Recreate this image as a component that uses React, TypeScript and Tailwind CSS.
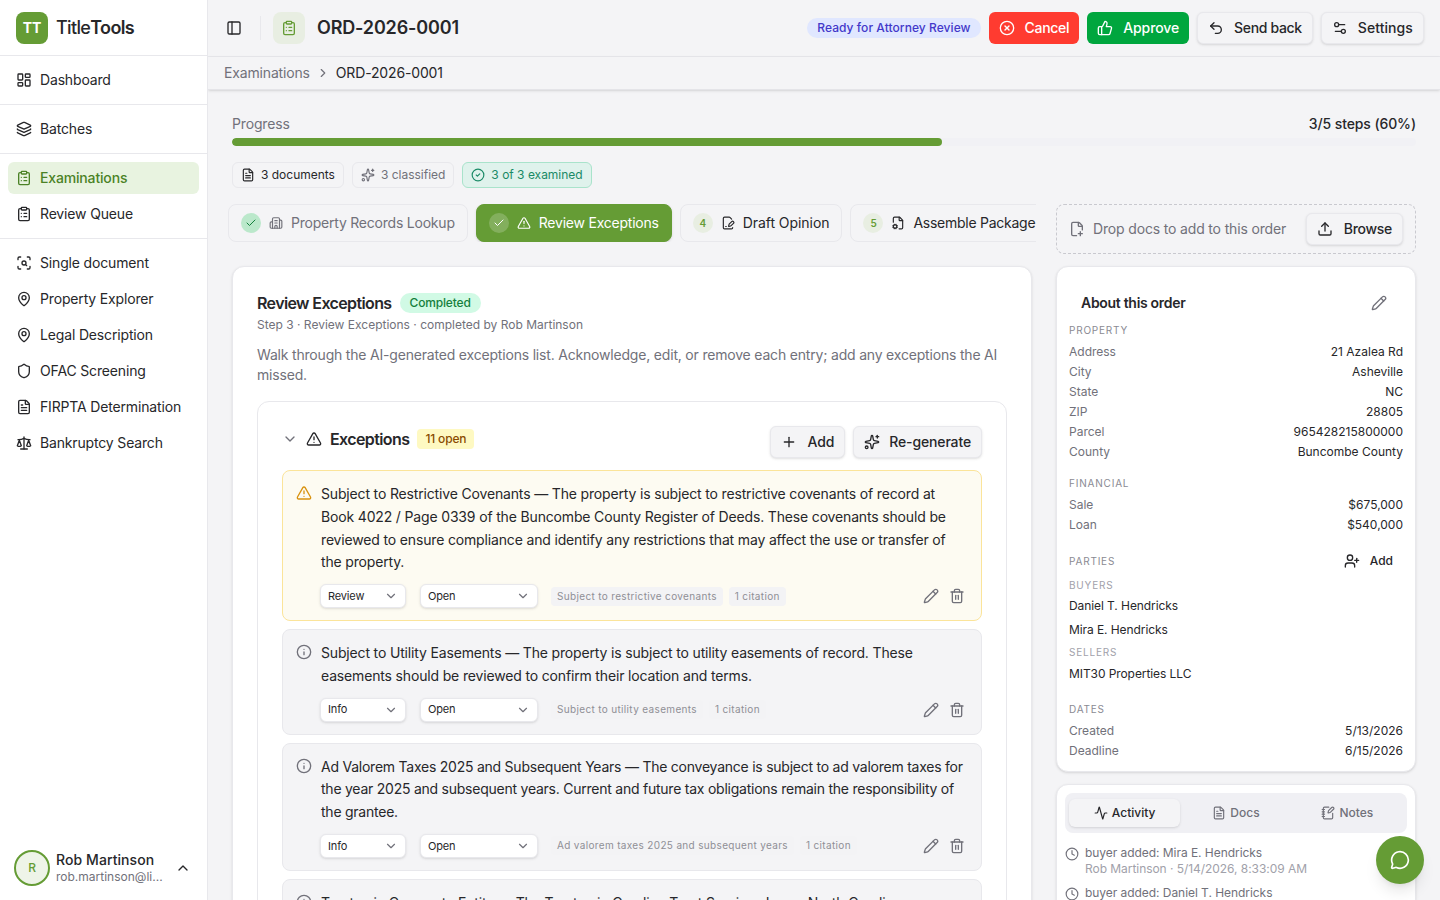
import React from "react";
import {
  LayoutDashboard, Layers, ClipboardList, ScanSearch, MapPin, Shield, FileText, Scale,
  ChevronUp, ChevronDown, ChevronRight, PanelLeft, CircleX, ThumbsUp, Undo2, Settings2,
  Sparkles, CircleCheck, Check, Building2, TriangleAlert, FilePenLine, FileCog, FilePlus2, Upload,
  Plus, Info, Pencil, Trash2, UserPlus, Clock, Activity, MessageCircle, NotebookPen,
} from "lucide-react";

const font = "font-['Inter','Liberation_Sans',sans-serif]";

function NavItem({ icon: Icon, label, active }: { icon: any; label: string; active?: boolean }) {
  return (
    <div className={`flex h-8 items-center gap-2 rounded-md px-2 text-sm ${active ? "bg-[#e8f3e0] font-medium text-[#4b8226]" : "text-[#27272a]"}`}>
      <Icon className="size-4 shrink-0" strokeWidth={2} />
      <span>{label}</span>
    </div>
  );
}

function Sidebar() {
  return (
    <aside className="flex h-full w-[208px] shrink-0 flex-col border-r border-[#e8e8ec] bg-white">
      <div className="flex h-[56px] shrink-0 items-center gap-2 border-b border-[#e8e8ec] px-4">
        <div className="flex size-8 items-center justify-center rounded-lg bg-[#659c35] text-sm font-bold text-white">TT</div>
        <span className="text-lg font-semibold tracking-[-0.65px] text-[#27272a]"><span className="font-medium">Title</span>Tools</span>
      </div>
      <div className="border-b border-[#e8e8ec] p-2"><NavItem icon={LayoutDashboard} label="Dashboard" /></div>
      <div className="border-b border-[#e8e8ec] p-2"><NavItem icon={Layers} label="Batches" /></div>
      <div className="flex flex-col gap-1 border-b border-[#e8e8ec] p-2">
        <NavItem icon={ClipboardList} label="Examinations" active />
        <NavItem icon={ClipboardList} label="Review Queue" />
      </div>
      <div className="flex flex-col gap-1 p-2">
        <NavItem icon={ScanSearch} label="Single document" />
        <NavItem icon={MapPin} label="Property Explorer" />
        <NavItem icon={MapPin} label="Legal Description" />
        <NavItem icon={Shield} label="OFAC Screening" />
        <NavItem icon={FileText} label="FIRPTA Determination" />
        <NavItem icon={Scale} label="Bankruptcy Search" />
      </div>
      <div className="mt-auto flex items-center gap-1.5 pb-[14px] pl-3.5 pr-4">
        <div className="flex size-9 shrink-0 items-center justify-center rounded-full border-2 border-[#659c35] bg-[#eef4e8] text-xs font-medium text-[#659c35]">R</div>
        <div className="min-w-0 flex-1">
          <div className="text-sm font-medium leading-[18px] tracking-[0.08px] text-[#27272a]">Rob Martinson</div>
          <div className="truncate text-xs leading-4 tracking-normal text-[#71717a]">rob.martinson@li...</div>
        </div>
        <ChevronUp className="size-4 text-[#27272a]" />
      </div>
    </aside>
  );
}

function HBtn({ icon: Icon, label, cls }: { icon: any; label: string; cls: string }) {
  return (
    <div className={`flex h-8 items-center gap-2 rounded-md px-2.5 text-sm font-medium ${cls}`}>
      <Icon className="size-4" />
      <span className="ml-0.5">{label}</span>
    </div>
  );
}

function Header() {
  const outline = "border border-[#e8e8ec] bg-[#f4f4f6] text-[#27272a] shadow-sm";
  return (
    <>
      <header className="flex h-[57px] shrink-0 items-center border-b border-[#e8e8ec] pl-[18px] pr-4">
        <PanelLeft className="size-4 text-[#27272a]" />
        <div className="ml-[18px] h-6 w-px bg-[#e8e8ec]" />
        <div className="ml-3 flex size-8 items-center justify-center rounded-lg bg-[#e8eee2]">
          <ClipboardList className="size-4 text-[#659c35]" />
        </div>
        <h1 className="ml-3 text-lg font-semibold text-[#27272a]">ORD-2026-0001</h1>
        <div className="ml-auto flex items-center gap-2">
          <span className="flex h-5 items-center rounded-full bg-[#e0e7ff] px-2.5 text-xs font-medium tracking-[0.06px] text-[#4338ca]">Ready for Attorney Review</span>
          <HBtn icon={CircleX} label="Cancel" cls="bg-[#ff3b30] text-white tracking-[-0.3px]" />
          <HBtn icon={ThumbsUp} label="Approve" cls="bg-[#00a63e] text-white tracking-[-0.1px]" />
          <HBtn icon={Undo2} label="Send back" cls={`${outline} tracking-[-0.34px]`} />
          <HBtn icon={Settings2} label="Settings" cls={`${outline} tracking-[0.08px]`} />
        </div>
      </header>
      <div className="flex h-[33px] shrink-0 items-center gap-1.5 border-b border-[#e4e4e8] px-4 text-sm shadow-sm">
        <span className="text-[#71717a]">Examinations</span>
        <ChevronRight className="size-3.5 text-[#71717a]" />
        <span className="text-[#27272a]">ORD-2026-0001</span>
      </div>
    </>
  );
}

function Chip({ icon: Icon, label, cls }: { icon: any; label: string; cls: string }) {
  return (
    <div className={`flex h-[26px] items-center gap-1.5 rounded-md border px-2 text-xs tracking-[-0.01px] ${cls}`}>
      <Icon className="size-3.5" />
      <span>{label}</span>
    </div>
  );
}

function StepTab({ n, icon: Icon, label, state, cls }: { n: string; icon: any; label: string; state: "done" | "active" | "todo"; cls?: string }) {
  const wrap =
    state === "active"
      ? "border-[#659c35] bg-[#659c35] text-white shadow-sm"
      : state === "done"
      ? "border-[#e8e8ec] text-[#71717a]"
      : "border-[#e8e8ec] text-[#27272a]";
  const circle =
    state === "active"
      ? "bg-white/20 text-white"
      : state === "done"
      ? "bg-[#bbe8cb] text-[#15803d]"
      : "bg-[#e8eee2] text-[#659c35]";
  return (
    <div className={`flex h-[38px] shrink-0 items-center gap-2 rounded-lg border pl-3 pr-3 text-sm ${cls ?? "tracking-[-0.22px]"} ${wrap}`}>
      <span className={`flex size-5 items-center justify-center rounded-full text-[10px] font-semibold ${circle}`}>
        {state === "todo" ? n : <Check className="size-3" strokeWidth={2} />}
      </span>
      <Icon className="size-3.5" />
      <span>{label}</span>
    </div>
  );
}

function Sel({ label, w }: { label: string; w: string }) {
  return (
    <div className={`flex h-6 shrink-0 items-center justify-between rounded-md border border-[#e8e8ec] bg-white px-[7px] text-[11px] text-[#27272a] shadow-sm ${w}`}>
      <span>{label}</span>
      <ChevronDown className="size-3.5 text-[#71717a]" />
    </div>
  );
}

function Tag({ children }: { children: React.ReactNode }) {
  return <span className="flex h-[19px] items-center whitespace-nowrap rounded bg-[#f3f3f5] px-1.5 text-[10px] tracking-[0.34px] text-[#8f8f96]">{children}</span>;
}

function ExceptionItem({ warn, title, body, sev, tag, tight }: { warn?: boolean; title: string; body: string; sev: string; tag: string; tight?: boolean }) {
  return (
    <div className={`rounded-lg border py-3 pl-[13px] pr-4 ${warn ? "border-[#fbe49a] bg-[#fdfbf2]" : "border-[#e8e8ec] bg-[#f4f4f6]"}`}>
      <div className="flex gap-2.5">
        <div className="w-[15px] shrink-0 pt-[2px]">
          {warn ? <TriangleAlert className="size-4 text-[#d9920f]" /> : <Info className="size-4 text-[#71717a]" />}
        </div>
        <p className={`text-sm leading-[22.75px] text-[#27272a] ${tight ? "tracking-[-0.24px]" : ""}`}>{title} — {body}</p>
      </div>
      <div className="ml-[24px] mt-2.5 flex items-center">
        <Sel label={sev} w="w-[86px]" />
        <div className="w-3.5" />
        <Sel label="Open" w="w-[118px]" />
        <div className="flex items-center gap-1.5 pl-[13px]">
          <Tag>{tag}</Tag>
          <Tag>1 citation</Tag>
        </div>
        <div className="ml-auto flex items-center gap-2.5 text-[#71717a]">
          <Pencil className="size-4" />
          <Trash2 className="size-4" />
        </div>
      </div>
    </div>
  );
}

function LeftCard() {
  return (
    <section className="w-[800px] shrink-0 rounded-xl border border-[#e8e8ec] bg-white px-6 pt-6 shadow-sm">
      <div className="flex h-6 items-center gap-2">
        <h2 className="text-base font-semibold tracking-[-0.62px] text-[#27272a]">Review Exceptions</h2>
        <span className="flex h-5 items-center rounded-full bg-[#d1fae5] px-2.5 text-xs font-medium text-[#15803d]">Completed</span>
      </div>
      <p className="mt-0.5 text-xs leading-4 tracking-normal text-[#71717a]">Step 3 · Review Exceptions · completed by Rob Martinson</p>
      <p className="mt-3 text-sm leading-5 tracking-[-0.19px] text-[#71717a]">Walk through the AI-generated exceptions list. Acknowledge, edit, or remove each entry; add any exceptions the AI missed.</p>
      <div className="mt-4 rounded-xl border border-[#e8e8ec] bg-white px-6 pt-6">
        <div className="flex h-8 items-center">
          <div className="-mt-1.5 flex items-center">
            <ChevronDown className="size-4 text-[#71717a]" />
            <TriangleAlert className="ml-2 size-4 text-[#27272a]" />
            <h3 className="ml-2 text-base font-semibold tracking-[-0.6px] text-[#27272a]">Exceptions</h3>
            <span className="ml-2 flex h-5 items-center rounded bg-[#fef9c2] px-2 text-xs font-medium text-[#894b00]">11 open</span>
          </div>
          <div className="ml-auto flex gap-2">
            <div className="flex h-8 items-center gap-2.5 rounded-md border border-[#e8e8ec] bg-[#f4f4f6] px-2.5 text-sm font-medium tracking-[-0.1px] text-[#27272a] shadow-sm">
              <Plus className="size-4" />Add
            </div>
            <div className="flex h-8 items-center gap-2 rounded-md border border-[#e8e8ec] bg-[#f4f4f6] px-2.5 text-sm font-medium tracking-[-0.14px] text-[#27272a] shadow-sm">
              <Sparkles className="size-4" /><span className="ml-px">Re-generate</span>
            </div>
          </div>
        </div>
        <div className="mt-3 flex flex-col gap-2">
          <ExceptionItem warn sev="Review" tag="Subject to restrictive covenants" title="Subject to Restrictive Covenants" body="The property is subject to restrictive covenants of record at Book 4022 / Page 0339 of the Buncombe County Register of Deeds. These covenants should be reviewed to ensure compliance and identify any restrictions that may affect the use or transfer of the property." />
          <ExceptionItem sev="Info" tag="Subject to utility easements" title="Subject to Utility Easements" body="The property is subject to utility easements of record. These easements should be reviewed to confirm their location and terms." />
          <ExceptionItem tight sev="Info" tag="Ad valorem taxes 2025 and subsequent years" title="Ad Valorem Taxes 2025 and Subsequent Years" body="The conveyance is subject to ad valorem taxes for the year 2025 and subsequent years. Current and future tax obligations remain the responsibility of the grantee." />
          <ExceptionItem sev="Info" tag="Trustee in Corporate Entity" title="Trustee in Corporate Entity" body="The Trustee in Carolina Trust Services Inc as North Carolina" />
        </div>
      </div>
    </section>
  );
}

function Row({ k, v }: { k: string; v: string }) {
  return (
    <div className="flex h-5 items-center justify-between text-xs tracking-normal">
      <span className="text-[#71717a]">{k}</span>
      <span className="text-[#27272a]">{v}</span>
    </div>
  );
}

function Label({ children, cls }: { children: React.ReactNode; cls?: string }) {
  return <div className={`text-[10px] uppercase leading-[15px] tracking-[0.08em] ${cls ?? "text-[#8a8a93]"}`}>{children}</div>;
}

function AboutCard() {
  return (
    <section className="rounded-xl border border-[#e8e8ec] bg-white px-3 pb-2.5 pt-6 shadow-sm">
      <div className="flex h-6 items-center justify-between pl-3 pr-4">
        <h3 className="text-sm font-semibold tracking-[-0.3px] text-[#27272a]">About this order</h3>
        <Pencil className="size-4 text-[#71717a]" />
      </div>
      <Label cls="mt-2 text-[#8a8a93]">Property</Label>
      <div className="mt-1">
        <Row k="Address" v="21 Azalea Rd" />
        <Row k="City" v="Asheville" />
        <Row k="State" v="NC" />
        <Row k="ZIP" v="28805" />
        <Row k="Parcel" v="965428215800000" />
        <Row k="County" v="Buncombe County" />
      </div>
      <Label cls="mt-3.5 text-[#8a8a93]">Financial</Label>
      <div className="mt-1">
        <Row k="Sale" v="$675,000" />
        <Row k="Loan" v="$540,000" />
      </div>
      <div className="mt-2.5 flex h-8 items-center justify-between">
        <Label>Parties</Label>
        <div className="mr-2.5 flex items-center gap-2.5 text-xs font-medium tracking-normal text-[#27272a]">
          <UserPlus className="size-4" />
          <span>Add</span>
        </div>
      </div>
      <Label cls="mt-px text-[#a1a1aa]">Buyers</Label>
      <div className="mt-px flex h-6 items-center text-xs tracking-[-0.08px] text-[#27272a]">Daniel T. Hendricks</div>
      <div className="flex h-6 items-center text-xs tracking-[-0.08px] text-[#27272a]">Mira E. Hendricks</div>
      <Label cls="mt-[3px] text-[#a1a1aa]">Sellers</Label>
      <div className="mt-0.5 flex h-6 items-center text-xs tracking-[-0.08px] text-[#27272a]">MIT30 Properties LLC</div>
      <Label cls="mt-4 text-[#8a8a93]">Dates</Label>
      <div className="mt-1">
        <Row k="Created" v="5/13/2026" />
        <Row k="Deadline" v="6/15/2026" />
      </div>
    </section>
  );
}

function Log({ a, b }: { a: string; b: string }) {
  return (
    <div className="flex gap-1.5">
      <Clock className="mt-0.5 size-3.5 shrink-0 text-[#71717a]" />
      <div className="text-xs tracking-[-0.05px]">
        <div className="leading-4 text-[#71717a]">{a}</div>
        <div className="leading-4 text-[#a1a1aa]">{b}</div>
      </div>
    </div>
  );
}

function ActivityCard() {
  return (
    <section className="rounded-xl border border-[#e8e8ec] bg-white p-2 shadow-sm">
      <div className="grid h-10 grid-cols-3 items-center rounded-lg bg-[#f0f0f4] p-1 text-xs font-medium tracking-normal">
        <div className="flex h-7 items-center justify-center gap-1 rounded-md bg-[#f4f4f6] text-[#27272a] shadow-sm">
          <Activity className="size-3.5" />Activity
        </div>
        <div className="flex h-7 items-center justify-center gap-1 text-[#71717a]">
          <FileText className="size-3.5" />Docs
        </div>
        <div className="flex h-7 items-center justify-center gap-1 text-[#71717a]">
          <NotebookPen className="size-3.5" />Notes
        </div>
      </div>
      <div className="mt-3 flex flex-col gap-2 pb-3">
        <Log a="buyer added: Mira E. Hendricks" b="Rob Martinson · 5/14/2026, 8:33:09 AM" />
        <Log a="buyer added: Daniel T. Hendricks" b="Rob Martinson · 5/14/2026, 8:33:01 AM" />
      </div>
    </section>
  );
}

export default function App() {
  return (
    <div className={`relative flex h-screen w-full overflow-hidden bg-[#f4f4f6] tracking-[-0.16px] ${font}`}>
      <Sidebar />
      <main className="flex min-w-0 flex-1 flex-col overflow-hidden">
        <Header />
        <div className="min-h-0 flex-1 overflow-hidden px-6 pt-6">
          <div className="flex h-5 items-center justify-between text-sm">
            <span className="text-[#71717a]">Progress</span>
            <span className="font-medium tracking-[-0.1px] text-[#27272a]">3/5 steps (60%)</span>
          </div>
          <div className="mt-1 h-2 w-full overflow-hidden rounded-full bg-[#f1f1f5]">
            <div className="h-full rounded-full bg-[#659c35]" style={{ width: "60%" }} />
          </div>
          <div className="mt-4 flex gap-2">
            <Chip icon={FileText} label="3 documents" cls="border-[#e8e8ec] text-[#27272a]" />
            <Chip icon={Sparkles} label="3 classified" cls="border-[#e8e8ec] text-[#71717a]" />
            <Chip icon={CircleCheck} label="3 of 3 examined" cls="border-[#a9e3cb] bg-[#dff2ec] text-[#1a8a66]" />
          </div>
          <div className="mt-4 flex items-start gap-5">
            <div className="-ml-1 flex w-[808px] shrink-0 gap-2 overflow-hidden">
              <StepTab n="2" icon={Building2} label="Property Records Lookup" state="done" />
              <StepTab n="3" icon={TriangleAlert} label="Review Exceptions" state="active" />
              <StepTab n="4" icon={FilePenLine} label="Draft Opinion" state="todo" cls="tracking-[-0.06px]" />
              <StepTab n="5" icon={FileCog} label="Assemble Package" state="todo" cls="tracking-[-0.26px]" />
            </div>
            <div className="flex h-[50px] min-w-0 flex-1 items-center gap-2 rounded-lg border border-dashed border-[#c9c9cf] pl-3 pr-3">
              <FilePlus2 className="size-4 text-[#71717a]" />
              <span className="text-sm text-[#71717a]">Drop docs to add to this order</span>
              <div className="ml-auto flex h-8 items-center gap-[11px] rounded-md border border-[#e8e8ec] bg-[#f4f4f6] px-2.5 text-sm font-medium tracking-[-0.3px] text-[#27272a] shadow-sm">
                <Upload className="size-4" />Browse
              </div>
            </div>
          </div>
          <div className="mt-3 flex items-start gap-6">
            <LeftCard />
            <div className="flex min-w-0 flex-1 flex-col gap-3">
              <AboutCard />
              <ActivityCard />
            </div>
          </div>
        </div>
      </main>
      <div className="absolute bottom-4 right-4 flex size-12 items-center justify-center rounded-full bg-[#659c35] shadow-lg">
        <MessageCircle className="size-5 text-white" />
      </div>
    </div>
  );
}
